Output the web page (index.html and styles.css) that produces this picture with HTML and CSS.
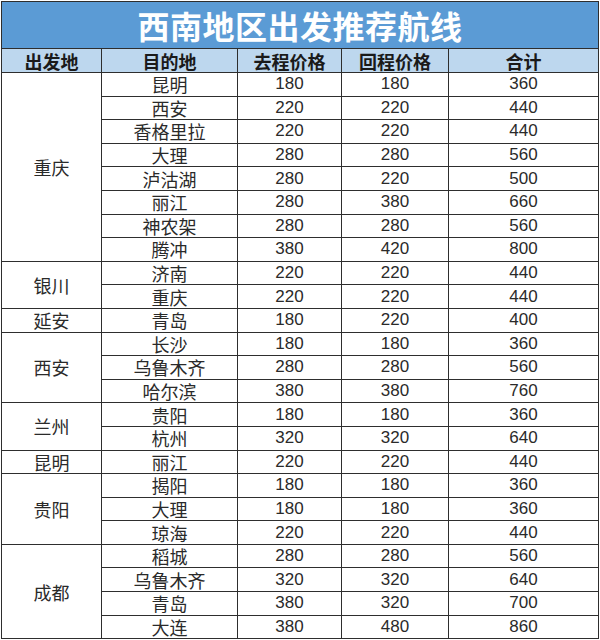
FILE: index.html
```html
<!DOCTYPE html>
<html lang="zh-CN">
<head>
<meta charset="utf-8">
<title>西南地区出发推荐航线</title>
<link rel="stylesheet" href="styles.css">
</head>
<body>
<table class="routes">
  <colgroup>
    <col class="c-from">
    <col class="c-to">
    <col class="c-go">
    <col class="c-back">
    <col class="c-sum">
  </colgroup>
  <thead>
    <tr class="title-row"><th colspan="5" class="title">西南地区出发推荐航线</th></tr>
    <tr class="head-row">
      <th>出发地</th><th>目的地</th><th>去程价格</th><th>回程价格</th><th>合计</th>
    </tr>
  </thead>
  <tbody>
    <tr><td rowspan="8" class="from">重庆</td><td class="city">昆明</td><td class="num">180</td><td class="num">180</td><td class="num">360</td></tr>
    <tr><td class="city">西安</td><td class="num">220</td><td class="num">220</td><td class="num">440</td></tr>
    <tr><td class="city">香格里拉</td><td class="num">220</td><td class="num">220</td><td class="num">440</td></tr>
    <tr><td class="city">大理</td><td class="num">280</td><td class="num">280</td><td class="num">560</td></tr>
    <tr><td class="city">泸沽湖</td><td class="num">280</td><td class="num">220</td><td class="num">500</td></tr>
    <tr><td class="city">丽江</td><td class="num">280</td><td class="num">380</td><td class="num">660</td></tr>
    <tr><td class="city">神农架</td><td class="num">280</td><td class="num">280</td><td class="num">560</td></tr>
    <tr><td class="city">腾冲</td><td class="num">380</td><td class="num">420</td><td class="num">800</td></tr>

    <tr><td rowspan="2" class="from">银川</td><td class="city">济南</td><td class="num">220</td><td class="num">220</td><td class="num">440</td></tr>
    <tr><td class="city">重庆</td><td class="num">220</td><td class="num">220</td><td class="num">440</td></tr>

    <tr><td class="from">延安</td><td class="city">青岛</td><td class="num">180</td><td class="num">220</td><td class="num">400</td></tr>

    <tr><td rowspan="3" class="from">西安</td><td class="city">长沙</td><td class="num">180</td><td class="num">180</td><td class="num">360</td></tr>
    <tr><td class="city">乌鲁木齐</td><td class="num">280</td><td class="num">280</td><td class="num">560</td></tr>
    <tr><td class="city">哈尔滨</td><td class="num">380</td><td class="num">380</td><td class="num">760</td></tr>

    <tr><td rowspan="2" class="from">兰州</td><td class="city">贵阳</td><td class="num">180</td><td class="num">180</td><td class="num">360</td></tr>
    <tr><td class="city">杭州</td><td class="num">320</td><td class="num">320</td><td class="num">640</td></tr>

    <tr><td class="from">昆明</td><td class="city">丽江</td><td class="num">220</td><td class="num">220</td><td class="num">440</td></tr>

    <tr><td rowspan="3" class="from">贵阳</td><td class="city">揭阳</td><td class="num">180</td><td class="num">180</td><td class="num">360</td></tr>
    <tr><td class="city">大理</td><td class="num">180</td><td class="num">180</td><td class="num">360</td></tr>
    <tr><td class="city">琼海</td><td class="num">220</td><td class="num">220</td><td class="num">440</td></tr>

    <tr><td rowspan="4" class="from">成都</td><td class="city">稻城</td><td class="num">280</td><td class="num">280</td><td class="num">560</td></tr>
    <tr><td class="city">乌鲁木齐</td><td class="num">320</td><td class="num">320</td><td class="num">640</td></tr>
    <tr><td class="city">青岛</td><td class="num">380</td><td class="num">320</td><td class="num shifted">700</td></tr>
    <tr><td class="city">大连</td><td class="num">380</td><td class="num">480</td><td class="num">860</td></tr>
  </tbody>
</table>
</body>
</html>
```

FILE: styles.css
```css
html, body {
  margin: 0;
  padding: 0;
  background: #ffffff;
}

.routes {
  margin: 1px 0 0 1px;
  width: 597px;
  table-layout: fixed;
  border-collapse: collapse;
  font-family: "Liberation Sans", "Noto Sans CJK SC", sans-serif;
  color: #222;
}

.c-from { width: 100px; }
.c-to { width: 136px; }
.c-go { width: 104px; }
.c-back { width: 107px; }
.c-sum { width: 150px; }

.routes th,
.routes td {
  border: 1px solid #2e2e2e;
  padding: 0;
  text-align: center;
  vertical-align: middle;
  line-height: 20px;
}

.title-row { height: 47px; }

.title {
  background: #5b9bd5;
  color: #ffffff;
  font-family: "Noto Sans CJK SC", sans-serif;
  font-size: 32px;
  font-weight: 700;
  letter-spacing: 0.5px;
  line-height: 40px;
  padding-top: 3px;
}

.head-row { height: 24px; }

.head-row th {
  background: #bdd7ee;
  font-family: "Noto Sans CJK SC", sans-serif;
  font-size: 18px;
  font-weight: 700;
  color: #1a1a1a;
}

.routes tbody tr { height: 23.6px; }

.from,
.city {
  font-family: "Noto Sans CJK SC", sans-serif;
  font-size: 18px;
  font-weight: 400;
  color: #2a2a2a;
}

.num {
  font-size: 17px;
  color: #2a2a2a;
  padding-top: 2px;
}

.shifted {
  padding-right: 11px;
  padding-top: 4px;
}
```
